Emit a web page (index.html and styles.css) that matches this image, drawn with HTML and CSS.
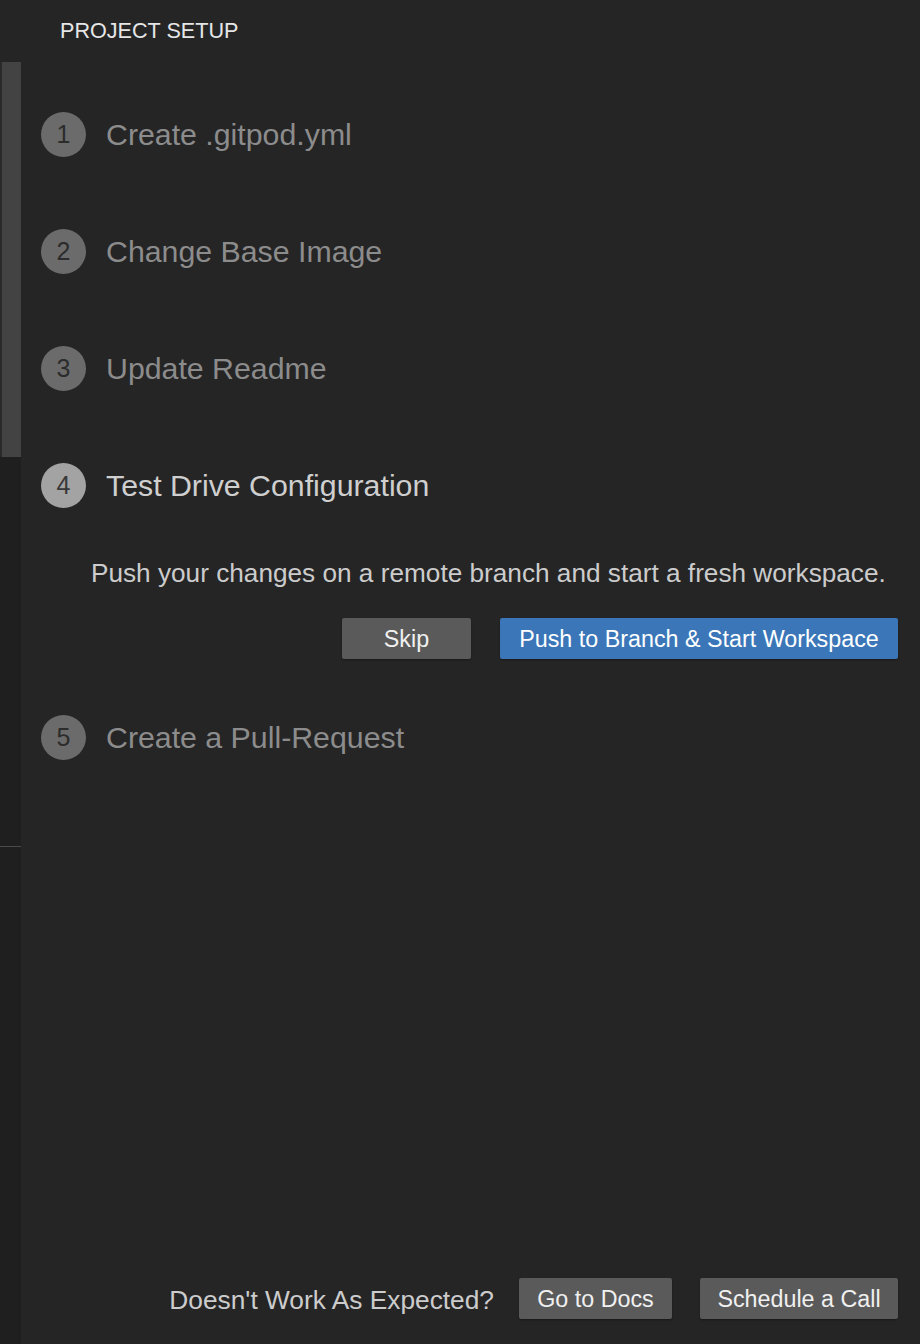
FILE: index.html
```html
<!DOCTYPE html>
<html lang="en">
<head>
<meta charset="utf-8">
<title>Project Setup</title>
<link rel="stylesheet" href="styles.css">
</head>
<body>
<div class="layout">
  <aside class="strip">
    <div class="strip-top"></div>
    <div class="thumb"></div>
    <div class="strip-rest"><div class="strip-gap"></div><div class="strip-line"></div></div>
  </aside>
  <main class="panel">
    <h1 class="header">PROJECT SETUP</h1>
    <ol class="steps">
      <li class="step">
        <div class="step-row"><span class="num">1</span><span class="title">Create .gitpod.yml</span></div>
      </li>
      <li class="step">
        <div class="step-row"><span class="num">2</span><span class="title">Change Base Image</span></div>
      </li>
      <li class="step">
        <div class="step-row"><span class="num">3</span><span class="title">Update Readme</span></div>
      </li>
      <li class="step active">
        <div class="step-row"><span class="num">4</span><span class="title">Test Drive Configuration</span></div>
        <p class="desc">Push your changes on a remote branch and start a fresh workspace.</p>
        <div class="actions">
          <button class="btn btn-skip">Skip</button>
          <button class="btn btn-primary">Push to Branch &amp; Start Workspace</button>
        </div>
      </li>
      <li class="step after-active">
        <div class="step-row"><span class="num">5</span><span class="title">Create a Pull-Request</span></div>
      </li>
    </ol>
    <footer class="footer">
      <span class="help">Doesn't Work As Expected?</span>
      <button class="btn btn-docs">Go to Docs</button>
      <button class="btn btn-call">Schedule a Call</button>
    </footer>
  </main>
</div>
</body>
</html>
```

FILE: styles.css
```css
* { box-sizing: border-box; }
html, body { margin: 0; padding: 0; }
body {
  background: #252526;
  font-family: "Liberation Sans", Arial, Helvetica, sans-serif;
  color: #cccccc;
  width: 920px;
  height: 1344px;
  overflow: hidden;
}
.layout {
  display: flex;
  height: 1344px;
}
.strip {
  width: 21px;
  display: flex;
  flex-direction: column;
  flex-shrink: 0;
}
.strip-top { height: 62px; background: #252526; }
.thumb {
  height: 395px;
  background: #434343;
  border-left: 2px solid #2a2a2a;
}
.strip-rest {
  flex: 1;
  background: #1f1f1f;
}
.strip-gap { height: 389px; }
.strip-line { height: 1px; background: #4a4a4a; }

.panel {
  flex: 1;
  min-width: 0;
  display: flex;
  flex-direction: column;
  padding: 0 22px 25px 20px;
}
.header {
  margin: 19px 0 0 19px;
  font-size: 21.6px;
  line-height: 24px;
  font-weight: normal;
  color: #e6e6e6;
}
.steps {
  list-style: none;
  margin: 69px 0 0 0;
  padding: 0;
  display: flex;
  flex-direction: column;
  gap: 72px;
}
.step { min-width: 0; }
.step-row {
  display: flex;
  align-items: center;
  gap: 20px;
  height: 45px;
}
.num {
  width: 45px;
  height: 45px;
  border-radius: 50%;
  background: #6b6b6b;
  color: #2c2c2c;
  font-size: 25px;
  display: flex;
  align-items: center;
  justify-content: center;
  flex-shrink: 0;
}
.title {
  font-size: 30.3px;
  color: #8c8c8c;
  line-height: 36px;
}
.active .num { background: #a3a3a3; color: #383838; }
.active .title { color: #cfcfcf; }
.after-active { margin-top: -16px; }

.desc {
  margin: 49px 0 0 50px;
  font-size: 26.2px;
  line-height: 32px;
  color: #cccccc;
  white-space: nowrap;
}
.actions {
  display: flex;
  justify-content: flex-end;
  gap: 29px;
  margin-top: 29px;
}
.btn {
  font-family: "Liberation Sans", Arial, Helvetica, sans-serif;
  font-size: 23.3px;
  height: 41px;
  border: none;
  border-radius: 2px;
  color: #f0f0f0;
  background: #5a5a5a;
  padding: 2px 0 0 0;
  box-shadow: 0 1px 2px rgba(0,0,0,0.35);
  cursor: pointer;
}
.btn-skip { width: 129px; }
.btn-primary { width: 398px; background: #3a76b8; color: #ffffff; }

.footer {
  margin-top: auto;
  display: flex;
  justify-content: flex-end;
  align-items: center;
  height: 41px;
}
.help {
  font-size: 26.3px;
  color: #cccccc;
  margin-right: 25px;
  padding-top: 3px;
}
.btn-docs { width: 153px; margin-right: 28px; }
.btn-call { width: 198px; }
```
